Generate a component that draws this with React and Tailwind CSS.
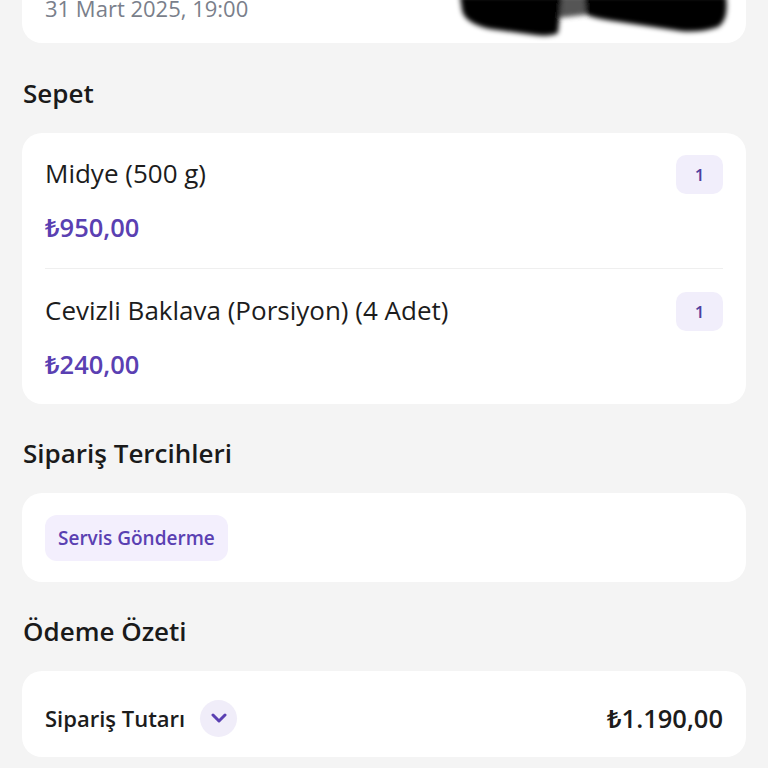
import React from "react";

const font = { fontFamily: '"Open Sans","Noto Sans",sans-serif' };

function Badge({ n }) {
  return (
    <div className="flex h-[39px] w-[47px] shrink-0 items-center justify-center rounded-[10px] bg-[#f1eefb] text-[17px] font-semibold text-[#4f3e9e]">
      {n}
    </div>
  );
}

function Item({ name, price, first }) {
  return (
    <div className={`flex items-start justify-between ${first ? "pb-[23px] border-b border-[#efefef]" : "pt-[23px]"}`}>
      <div className="flex flex-col">
        <div className="text-[26px] leading-[36px] text-[#1c1c1c]">{name}</div>
        <div className="mt-[18px] text-[25.5px] leading-[36px] font-semibold text-[#5a40b2]">{price}</div>
      </div>
      <Badge n="1" />
    </div>
  );
}

function Heading({ children, mt }) {
  return (
    <h2 className={`${mt} mb-[22px] px-[23px] text-[26px] leading-[36px] font-semibold text-[#1a1a1a]`}>
      {children}
    </h2>
  );
}

export default function App() {
  return (
    <div style={font} className="min-h-[768px] w-full overflow-hidden bg-[#f4f4f4]">
      {/* top card (cut) */}
      <div className="relative mx-[22px] -mt-[7px] rounded-b-[20px] bg-white px-[23px] pb-[20px]">
        <div className="text-[22px] leading-[30px] text-[#7a7f8b]">31 Mart 2025, 19:00</div>
        <svg className="absolute left-[428px] top-[7px]" width="290" height="50" viewBox="0 0 290 50">
          <defs>
            <filter id="b" x="-10%" y="-50%" width="120%" height="200%">
              <feGaussianBlur stdDeviation="2.5" />
            </filter>
          </defs>
          <g filter="url(#b)" fill="#000">
            <path d="M100 -4 L145 -4 L142 14 L108 18 Z" fill="#555" />
            <path d="M10 -4 L112 -4 L108 33 Q100 37 85 35 L40 29 Q14 23 12 10 Z" />
            <path d="M134 -4 L276 -4 Q279 20 268 27 Q250 33 230 31 L170 22 Q140 18 136 14 Z" />
          </g>
        </svg>
      </div>

      <Heading mt="mt-[32px]">Sepet</Heading>
      <div className="mx-[22px] rounded-[20px] bg-white px-[23px] pt-[22px] pb-[22px]">
        <Item first name="Midye (500 g)" price="₺950,00" />
        <Item name="Cevizli Baklava (Porsiyon) (4 Adet)" price="₺240,00" />
      </div>

      <Heading mt="mt-[31px]">Sipariş Tercihleri</Heading>
      <div className="mx-[22px] flex rounded-[20px] bg-white px-[23px] pt-[22px] pb-[21px]">
        <div className="flex h-[46px] items-center rounded-[12px] bg-[#f3effd] px-[13px] text-[19px] font-semibold text-[#5a40b2]">
          Servis Gönderme
        </div>
      </div>

      <Heading mt="mt-[31px]">Ödeme Özeti</Heading>
      <div className="mx-[22px] flex items-center justify-between rounded-[20px] bg-white px-[23px] pt-[28px] pb-[20px]">
        <div className="flex items-center gap-[15px]">
          <span className="text-[22px] font-semibold text-[#1c1c1c]">Sipariş Tutarı</span>
          <span className="flex h-[37px] w-[37px] items-center justify-center rounded-full bg-[#f0edf9]">
            <svg width="16" height="10" viewBox="0 0 16 10" fill="none">
              <path d="M2 2 L8 8 L14 2" stroke="#5a40b2" strokeWidth="3" strokeLinecap="round" strokeLinejoin="round" />
            </svg>
          </span>
        </div>
        <span className="text-[25.5px] font-semibold text-[#1c1c1c]">₺1.190,00</span>
      </div>
      <div className="h-[20px]" />
    </div>
  );
}
